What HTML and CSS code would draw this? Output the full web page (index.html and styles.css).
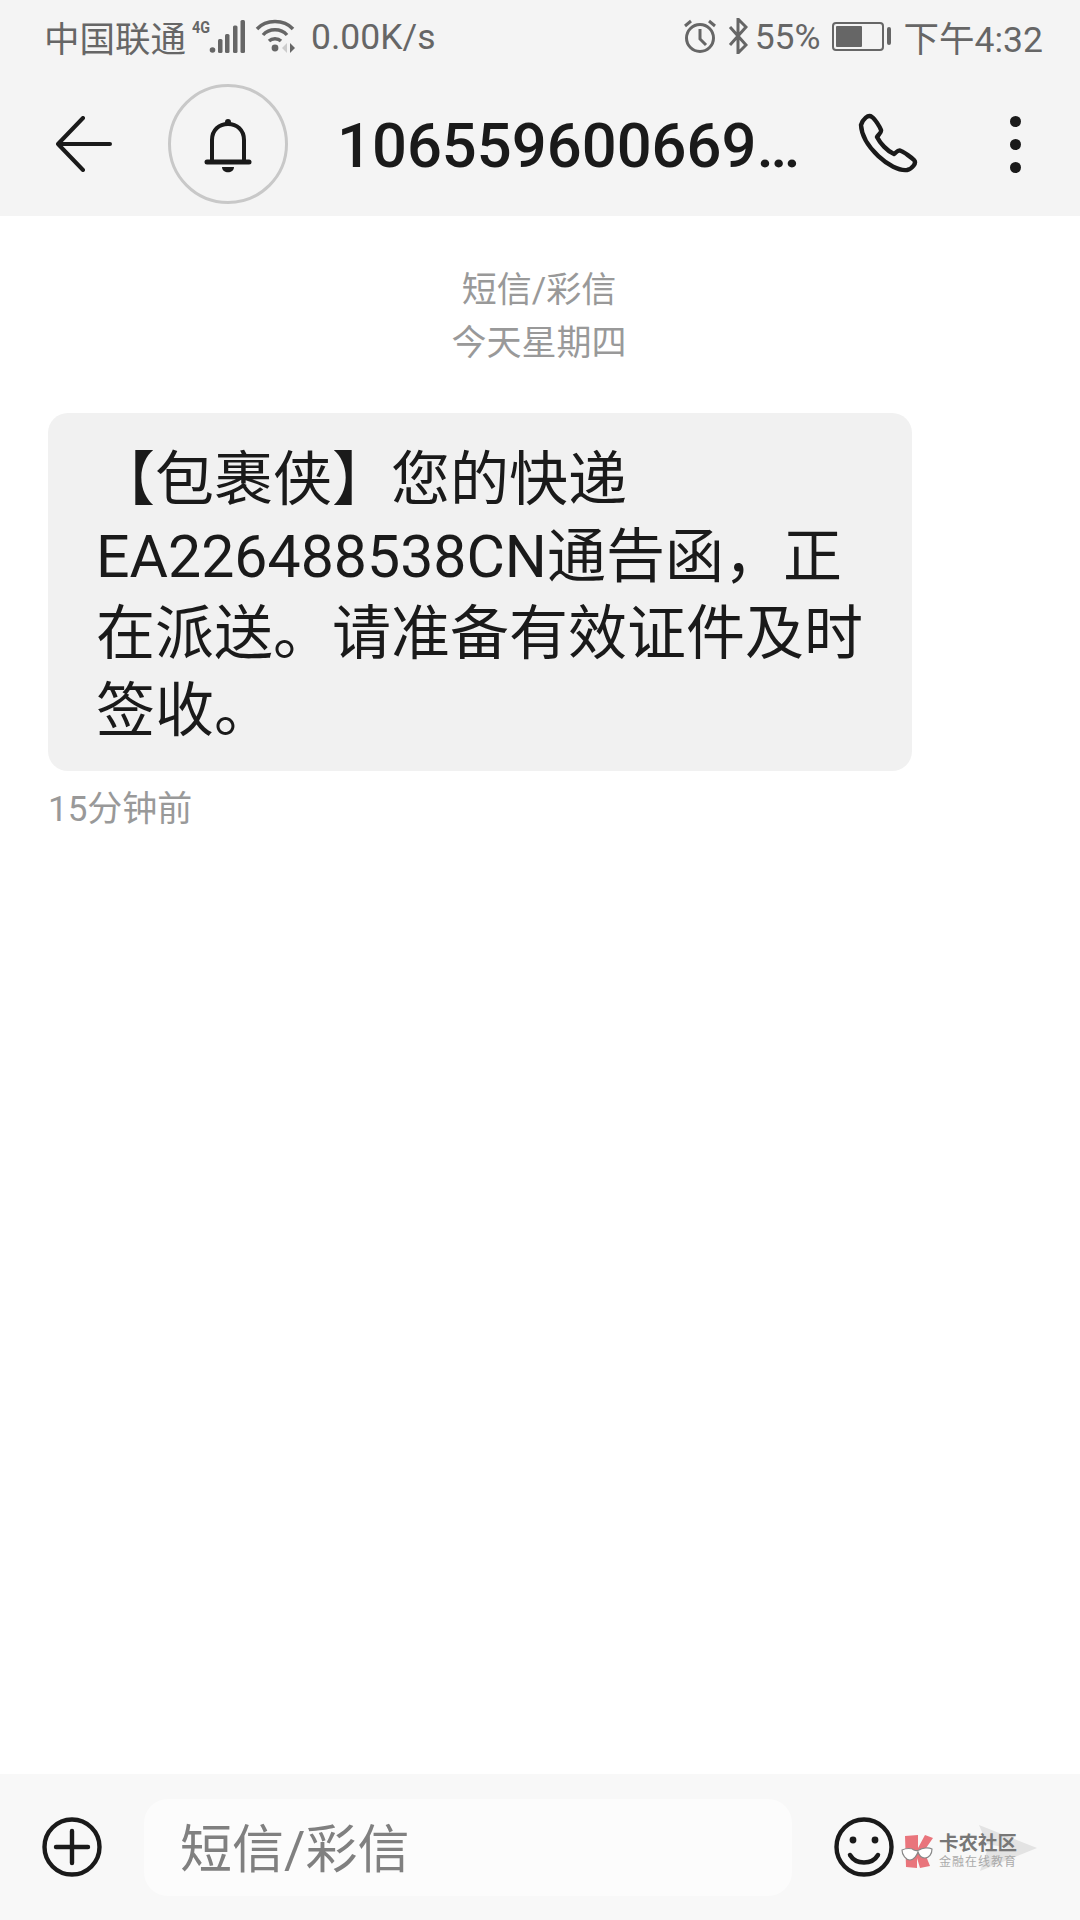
FILE: index.html
```html
<!DOCTYPE html>
<html lang="zh-CN">
<head>
  <meta charset="UTF-8" />
  <title>短信/彩信</title>
  <link rel="stylesheet" href="styles.css">
</head>
<body>
  <div class="phone">
    <header class="top">
      <div class="status">
        <div class="status-left">
          <span>中国联通</span>
          <svg class="ic-signal" width="54" height="36" viewBox="0 0 54 36">
            <text x="0" y="15" class="net" textLength="18" lengthAdjust="spacingAndGlyphs">4G</text>
            <circle cx="20.5" cy="32" r="2.8" fill="#666"/>
            <rect x="26" y="21" width="4.5" height="14" rx="1.5" fill="#666"/>
            <rect x="33" y="16" width="4.5" height="19" rx="1.5" fill="#666"/>
            <rect x="41" y="7.5" width="4.5" height="27.5" rx="1.5" fill="#666"/>
            <rect x="48.5" y="2" width="4.5" height="33" rx="1.5" fill="#666"/>
          </svg>
          <svg class="ic-wifi" width="42" height="36" viewBox="0 0 42 36" fill="none" stroke="#666" stroke-width="3.4">
            <path d="M2 11C11 1 29 1 38 11"/>
            <path d="M8 17C14 10 26 10 32 17"/>
            <path d="M14 23C17 20 23 20 26 23"/>
            <circle cx="20" cy="30" r="3.4" fill="#666" stroke="none"/>
            <path d="M35 25v10l5-5z" fill="#666" stroke="none"/>
            <path d="M32 25v10l-5-5z" fill="#ccc" stroke="none"/>
          </svg>
          <span class="speed">0.00K/s</span>
        </div>
        <div class="status-right">
          <svg width="34" height="36" viewBox="0 0 34 36" fill="none" stroke="#666" stroke-width="3">
            <circle cx="17" cy="20" r="13.5"/>
            <path d="M17 11v10l6 6"/>
            <path d="M2 8l6-5M32 8l-6-5"/>
          </svg>
          <svg class="ic-bt" width="20" height="36" viewBox="0 0 20 36" fill="none" stroke="#666" stroke-width="3">
            <path d="M2 9l16 18-8 8V1l8 8L2 27"/>
          </svg>
          <span class="batt-text">55%</span>
          <div class="battery">
            <div class="battery-body"><div class="battery-fill"></div></div>
            <div class="battery-tip"></div>
          </div>
          <span class="clock">下午4:32</span>
        </div>
      </div>
      <div class="toolbar">
        <svg class="ic-back" width="56" height="56" viewBox="0 0 56 56" fill="none" stroke="#1a1a1a" stroke-width="4" stroke-linecap="round" stroke-linejoin="round">
          <path d="M27 2L2 28l25 26M2 28h52"/>
        </svg>
        <div class="bell-wrap">
          <svg class="ic-bell" width="48" height="58" viewBox="0 0 48 58" fill="none" stroke="#1a1a1a" stroke-width="4" stroke-linecap="round" stroke-linejoin="round">
            <path d="M8 44V23C8 13 15 7 24 7s16 6 16 16v21"/>
            <path d="M3 45h42" stroke-width="5"/>
            <circle cx="24" cy="5" r="3" fill="#1a1a1a" stroke="none"/>
            <path d="M18 50h12c0 7-12 7-12 0z" fill="#1a1a1a" stroke="none"/>
          </svg>
        </div>
        <h1 class="title">106559600669…</h1>
        <svg class="ic-call" width="62" height="62" viewBox="0 0 62 62" fill="none" stroke="#1a1a1a" stroke-width="4.4" stroke-linejoin="round">
          <path d="M3 12C5 6 10 1 14 4c3 2 8 10 9 13 1 2-3 5-4 7 3 6 10 14 17 17 2-1 4-5 7-3 3 1 11 7 13 9 3 3-2 9-7 10C33 59 4 33 3 12z"/>
        </svg>
        <div class="dots"><i></i><i></i><i></i></div>
      </div>
    </header>

    <main class="thread">
      <div class="thread-head">
        <div>短信/彩信</div>
        <div>今天星期四</div>
      </div>
      <div class="bubble">【包裹侠】您的快递EA226488538CN通告函，正在派送。请准备有效证件及时签收。</div>
      <div class="when">15分钟前</div>
    </main>

    <footer class="composer">
      <svg class="ic-plus" width="60" height="60" viewBox="0 0 60 60" fill="none" stroke="#1a1a1a" stroke-width="4.4" stroke-linecap="round">
        <circle cx="30" cy="30" r="27.5"/>
        <path d="M30 14v32M14 30h32"/>
      </svg>
      <div class="input">短信/彩信</div>
      <svg class="ic-smile" width="60" height="60" viewBox="0 0 60 60" fill="none" stroke="#1a1a1a" stroke-width="4.4" stroke-linecap="round">
        <circle cx="30" cy="30" r="27.5"/>
        <circle cx="19" cy="23" r="3.4" fill="#1a1a1a" stroke="none"/>
        <circle cx="41" cy="23" r="3.4" fill="#1a1a1a" stroke="none"/>
        <path d="M16 38c6 10 22 10 28 0"/>
      </svg>
      <svg class="ic-send" width="60" height="48" viewBox="0 0 60 48">
        <path d="M1 1L59 24 2 47 9 27 30 24 9 20z" fill="#e3e3e3"/>
      </svg>
      <div class="mark">
        <svg width="34" height="34" viewBox="0 0 34 34">
          <path d="M5 2L18 1V14L25 1 33 4 24 17 30 32 20 34 17 24 17 34 6 33z" fill="#e9757c"/>
          <path d="M2 16c4-2 10-2 12 0 2 1 3 1 5 0 3-2 9-3 13-1 0 5-3 9-7 9s-6-3-7-6c-1 3-4 8-8 8S2 21 2 16z" fill="#fff" stroke="#888" stroke-width="1.2"/>
        </svg>
        <div class="mark-text">
          <b>卡农社区</b>
          <small>金融在线教育</small>
        </div>
      </div>
    </footer>
  </div>
</body>
</html>
```

FILE: styles.css
```css
* {
  box-sizing: border-box;
}

body {
  margin: 0;
  background: #fff;
  font-family: Roboto, "Noto Sans CJK SC", sans-serif;
}

.phone {
  width: 1080px;
  height: 1920px;
  display: flex;
  flex-direction: column;
}

.top {
  height: 216px;
  background: #f4f4f4;
}

.status {
  height: 72px;
  padding: 0 37px 0 44px;
  display: flex;
  justify-content: space-between;
  align-items: center;
  font-size: 35.5px;
  color: #666;
}

.status-left,
.status-right {
  display: flex;
  align-items: center;
}

.ic-signal {
  margin-left: 6px;
}

.net {
  font-size: 16px;
  font-weight: 700;
  fill: #666;
}

.ic-wifi {
  margin-left: 9px;
}

.speed {
  margin-left: 14px;
  margin-top: 2px;
}

.ic-bt {
  margin-left: 11px;
}

.batt-text {
  margin-left: 7px;
  margin-top: 2px;
}

.battery {
  margin-left: 11px;
  display: flex;
  align-items: center;
  gap: 3px;
}

.battery-body {
  width: 52px;
  height: 29px;
  border: 2px solid #666;
  border-radius: 4px;
  padding: 2px;
}

.battery-fill {
  width: 60%;
  height: 100%;
  background: #666;
  border-radius: 1px;
}

.battery-tip {
  width: 4px;
  height: 18px;
  background: #666;
  border-radius: 2px;
}

.clock {
  margin-left: 13px;
}

.toolbar {
  height: 144px;
  display: flex;
  align-items: center;
  padding-left: 56px;
}

.bell-wrap {
  width: 120px;
  height: 120px;
  margin-left: 56px;
  border: 3px solid #c8c8c8;
  border-radius: 50%;
  display: flex;
  align-items: center;
  justify-content: center;
}

.ic-bell {
  margin-top: 4px;
}

.title {
  width: 521px;
  margin: 4px 0 0 49px;
  font-size: 61.5px;
  font-weight: 500;
  color: #1a1a1a;
  white-space: nowrap;
}

.dots {
  margin-left: 90px;
  display: flex;
  flex-direction: column;
  gap: 12px;
}

.dots i {
  width: 11px;
  height: 11px;
  background: #1a1a1a;
  border-radius: 50%;
}

.thread {
  flex: 1;
  padding: 49px 48px 0;
}

.thread-head {
  font-size: 35px;
  line-height: 52.5px;
  color: #999;
  text-align: center;
}

.thread-head div {
  padding-right: 2px;
}

.bubble {
  width: 864px;
  margin-top: 43px;
  padding: 28px 46px 22px 48px;
  background: #f1f1f1;
  border-radius: 20px;
  font-size: 59px;
  line-height: 77px;
  color: #1a1a1a;
}

.when {
  margin-top: 14px;
  font-size: 35px;
  line-height: 50px;
  color: #999;
}

.composer {
  position: relative;
  height: 146px;
  background: #f8f8f8;
  display: flex;
  align-items: center;
  padding-left: 42px;
}

.input {
  width: 648px;
  height: 97px;
  margin-left: 42px;
  padding-left: 36px;
  background: #fcfcfc;
  border-radius: 24px;
  font-size: 52px;
  line-height: 103px;
  color: #808080;
}

.ic-smile {
  margin-left: 42px;
}

.ic-send {
  position: absolute;
  left: 978px;
  top: 50px;
}

.mark {
  position: absolute;
  left: 900px;
  top: 59px;
  display: flex;
  align-items: center;
  gap: 5px;
}

.mark-text {
  display: flex;
  flex-direction: column;
  color: #777;
}

.mark-text b {
  font-size: 19.5px;
  line-height: 22px;
  font-weight: 700;
}

.mark-text small {
  font-size: 12px;
  line-height: 14px;
  letter-spacing: 1px;
  color: #aaa;
}
```
